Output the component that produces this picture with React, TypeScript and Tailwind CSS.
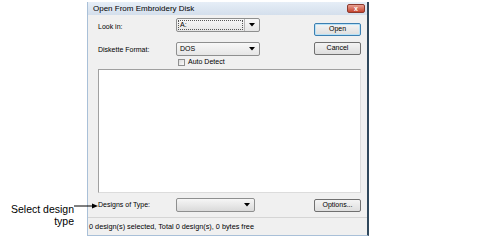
function Caret() {
  return (
    <svg width="6" height="4" viewBox="0 0 6 4" className="shrink-0">
      <path d="M0 0 H6 L3 3.5 Z" fill="#000" />
    </svg>
  );
}

function Combo({ value, focused }: { value?: string; focused?: boolean }) {
  return (
    <div className="flex items-center w-[84px] h-[14px] rounded-[2px] border border-[#8e8f8f] bg-gradient-to-b from-[#f8f8f8] to-[#e6e6e6]">
      <div className="flex-1 h-full flex items-center px-[1px]">
        {focused ? (
          <div className="w-full h-[10px] border border-dotted border-[#555] flex items-center px-[1px]">{value}</div>
        ) : (
          <span className="pl-[2px]">{value}</span>
        )}
      </div>
      {focused && <div className="w-px h-full bg-[#b5b5b5]" />}
      <div className="w-[14px] flex items-center justify-center">
        <Caret />
      </div>
    </div>
  );
}

function Button({ label, isDefault }: { label: string; isDefault?: boolean }) {
  return (
    <div
      className={`w-[47px] h-[13px] rounded-[2px] border flex items-center justify-center bg-gradient-to-b from-[#f4f4f4] to-[#dedede] ${
        isDefault ? 'border-[#3c7fb1] shadow-[inset_0_0_0_1px_#b8e2f7]' : 'border-[#707070]'
      }`}
    >
      {label}
    </div>
  );
}

export default function App() {
  return (
    <div
      className="w-[485px] h-[252px] bg-white flex pt-[2px] text-[7px] text-black relative"
      style={{ fontFamily: '"Liberation Sans", Arial, sans-serif' }}
    >
      <div className="w-[87px] shrink-0 flex flex-col items-end pr-[13px] pt-[201px] text-[10.5px] leading-[12px]">
        <span>Select design</span>
        <span>type</span>
      </div>

      {/* callout arrow */}
      <svg className="absolute left-[74px] top-[203px]" width="24" height="6" viewBox="0 0 24 6">
        <line x1="0" y1="3" x2="20" y2="3" stroke="#000" strokeWidth="1" />
        <path d="M24 3 L18 0.5 L18 5.5 Z" fill="#000" />
      </svg>

      <div className="w-[282px] h-[234px] flex flex-col bg-[#f0f0f0] border-l border-b border-[#a9c0d8] border-r-2 border-r-[#30485c]">
        <div className="h-[13px] flex items-center justify-between pl-[5px] pr-[2px] bg-gradient-to-b from-[#e6eef7] to-[#d4dfec] text-[8px]">
          <span>Open From Embroidery Disk</span>
          <div className="w-[18px] h-[9px] rounded-[2px] bg-gradient-to-b from-[#e8a093] to-[#c5422d] border border-[#8c3a2e] flex items-center justify-center text-white text-[7px] font-bold leading-none">
            x
          </div>
        </div>

        <div className="flex-1 flex flex-col pl-[10px] pr-[6px]">
          <div className="flex mt-[3px]">
            <div className="w-[78px] pt-[4px]">Look in:</div>
            <Combo value="A:" focused />
            <div className="ml-auto pt-[5px]">
              <Button label="Open" isDefault />
            </div>
          </div>

          <div className="flex mt-[6px]">
            <div className="w-[78px] pt-[3px]">Diskette Format:</div>
            <Combo value="DOS" />
            <div className="ml-auto">
              <Button label="Cancel" />
            </div>
          </div>

          <div className="flex items-center ml-[80px] mt-[2px] h-[9px]">
            <div className="w-[7px] h-[7px] border border-[#8f8f8f] bg-gradient-to-br from-[#dcdcdc] to-[#fafafa] mr-[3px]" />
            <span>Auto Detect</span>
          </div>

          <div className="mt-[2px] h-[124px] bg-white border border-[#a0a0a0] border-b-[#dcdcdc] border-r-[#dcdcdc]" />

          <div className="flex items-center mt-[5px]">
            <div className="w-[78px]">Designs of Type:</div>
            <div className="flex items-center w-[79px] h-[14px] rounded-[2px] border border-[#8e8f8f] bg-gradient-to-b from-[#f6f6f6] to-[#dadada] justify-end pr-[4px]">
              <Caret />
            </div>
            <div className="ml-auto">
              <Button label="Options..." />
            </div>
          </div>
        </div>

        <div className="h-[18px] border-t border-[#d5d5d5] flex items-center pl-[1px] pt-[1px] text-[7.3px]">
          0 design(s) selected, Total 0 design(s), 0 bytes free
        </div>
      </div>
    </div>
  );
}
